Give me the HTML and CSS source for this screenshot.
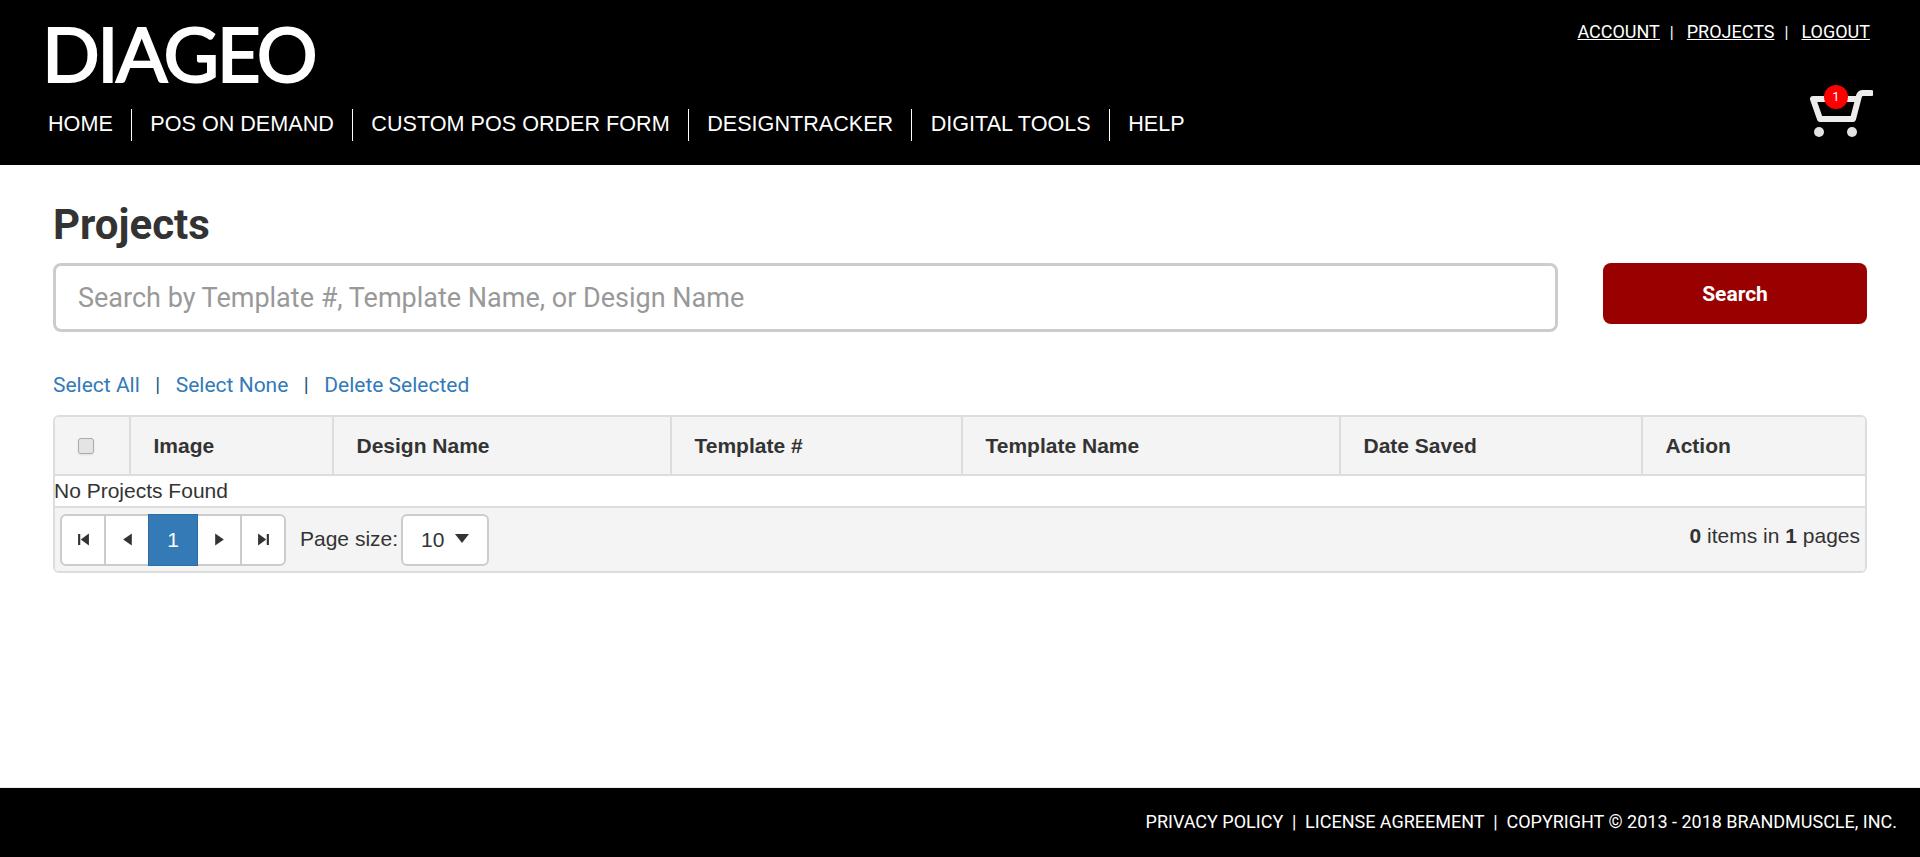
FILE: index.html
```html
<!DOCTYPE html>
<html lang="en">
<head>
<meta charset="utf-8">
<title>Projects</title>
<link rel="stylesheet" href="styles.css">
</head>
<body>
<div class="page">
  <header class="site-header">
    <div class="header-main">
      <div class="logo">DIAGEO</div>
      <nav class="main-nav">
        <a href="#">HOME</a><a href="#">POS ON DEMAND</a><a href="#">CUSTOM POS ORDER FORM</a><a href="#">DESIGNTRACKER</a><a href="#">DIGITAL TOOLS</a><a href="#">HELP</a>
      </nav>
    </div>
    <div class="header-side">
      <div class="user-links">
        <a href="#">ACCOUNT</a><span class="sep">|</span><a href="#">PROJECTS</a><span class="sep">|</span><a href="#">LOGOUT</a>
      </div>
      <div class="cart">
        <svg class="cart-icon" viewBox="0 0 64 50" width="64" height="50" aria-hidden="true">
          <path d="M4 12 H49 M4 12 L11 32 H44 L50 9 Q51 6 54 6 H62" fill="none" stroke="#ececec" stroke-width="6" stroke-linecap="round" stroke-linejoin="round"/>
          <circle cx="10" cy="45" r="5" fill="#e2e2e2"/>
          <circle cx="43" cy="45" r="5" fill="#e2e2e2"/>
        </svg>
        <span class="badge">1</span>
      </div>
    </div>
  </header>

  <main class="content">
    <h1 class="title">Projects</h1>
    <form class="search-row">
      <input class="search-input" type="text" placeholder="Search by Template #, Template Name, or Design Name">
      <button class="search-btn" type="button">Search</button>
    </form>
    <div class="actions">
      <a href="#">Select All</a><span class="sep">|</span><a href="#">Select None</a><span class="sep">|</span><a href="#">Delete Selected</a>
    </div>
    <section class="grid">
      <div class="grid-head">
        <div class="cell check"><input type="checkbox" class="checkbox"></div>
        <div class="cell">Image</div>
        <div class="cell">Design Name</div>
        <div class="cell">Template #</div>
        <div class="cell">Template Name</div>
        <div class="cell">Date Saved</div>
        <div class="cell">Action</div>
      </div>
      <div class="grid-empty">No Projects Found</div>
      <div class="grid-pager">
        <div class="pager">
          <a class="pg first" href="#"><svg viewBox="0 0 12 12" width="13" height="13"><path d="M1 1h2v10H1zM11 .5v11L3.500 6z"/></svg></a>
          <a class="pg" href="#"><svg viewBox="0 0 12 12" width="13" height="13"><path d="M10 .5v11L2 6z"/></svg></a>
          <a class="pg current" href="#">1</a>
          <a class="pg next" href="#"><svg viewBox="0 0 12 12" width="13" height="13"><path d="M2 .5v11L10 6z"/></svg></a>
          <a class="pg" href="#"><svg viewBox="0 0 12 12" width="13" height="13"><path d="M9 1h2v10H9zM1 .5v11L8.500 6z"/></svg></a>
        </div>
        <span class="size-label">Page size:</span>
        <div class="size-select"><span>10</span><i class="caret"></i></div>
        <div class="pager-info"><b>0</b> items in <b>1</b> pages</div>
      </div>
    </section>
  </main>

  <footer class="site-footer">
    <a href="#">PRIVACY POLICY</a><span class="sep">|</span><a href="#">LICENSE AGREEMENT</a><span class="sep">|</span><span>COPYRIGHT © 2013 - 2018 BRANDMUSCLE, INC.</span>
  </footer>
</div>
</body>
</html>
```
FILE: styles.css
```css
* { box-sizing: border-box; }
html, body { margin: 0; height: 100%; }
body { font-family: "Liberation Sans", Arial, sans-serif; color: #333; background: #fff; }
a { text-decoration: none; color: inherit; }
.page { height: 857px; display: flex; flex-direction: column; overflow: hidden; }

.site-header { height: 165px; background: #000; color: #fff; display: flex; justify-content: space-between; padding: 0 50px 0 48px; flex: none; }
.logo { font-family: Lato, sans-serif; font-size: 76px; font-weight: 400; line-height: 57px; margin: 24px 0 0 -6px; letter-spacing: -2.5px; -webkit-text-stroke: 2px #fff; }
.main-nav { display: flex; margin-top: 28px; }
.main-nav a { font-size: 21.6px; line-height: 30px; height: 32px; padding: 0 18.250px; border-left: 1px solid #fff; }
.main-nav a:first-child { border-left: 0; padding-left: 0; }
.header-side { display: flex; flex-direction: column; align-items: flex-end; }
.user-links { font-family: Roboto, sans-serif; font-size: 18px; line-height: 20px; margin-top: 22px; }
.user-links a { text-decoration: underline; }
.user-links .sep { margin: 0 13px 0 10px; font-size: 16px; }
.cart { position: relative; width: 64px; height: 50px; margin-top: 44px; margin-right: -3px; }
.cart-icon { display: block; }
.badge { position: absolute; left: 15px; top: -2px; width: 24px; height: 24px; border-radius: 50%; background: #f00; color: #fff; font-family: Roboto, sans-serif; font-size: 13px; line-height: 24px; text-align: center; }

.content { flex: 1; padding: 0 53px; }
.title { font-family: Roboto, sans-serif; font-size: 42px; font-weight: 700; line-height: 46px; margin: 37px 0 15px; color: #333; }
.search-row { display: flex; justify-content: space-between; align-items: flex-start; }
.search-input { width: 1505px; height: 69px; border: 3px solid #ccc; border-radius: 8px; padding: 0 22px; font-family: Roboto, sans-serif; font-size: 27px; outline: none; }
.search-input::placeholder { color: #999; opacity: 1; }
.search-btn { width: 264px; height: 61px; border: 0; border-radius: 8px; background: #990000; color: #fff; font-family: Roboto, sans-serif; font-size: 21px; font-weight: 700; }
.actions { font-family: Roboto, sans-serif; font-size: 21px; line-height: 24px; margin-top: 41px; color: #337ab7; }
.actions .sep { color: #23527c; margin: 0 15.500px; font-size: 20px; }

.grid { margin-top: 18px; border: 2px solid #ddd; border-radius: 6px; overflow: hidden; width: 1814px; }
.grid-head { display: grid; grid-template-columns: 74px 203px 338px 291px 378px 302px 1fr; height: 59px; background: #f4f4f4; border-bottom: 2px solid #ddd; font-weight: 700; font-size: 21px; }
.cell { display: flex; align-items: center; padding-left: 22.500px; border-left: 2px solid #ddd; }
.cell:first-child { border-left: 0; padding-left: 23px; }
.checkbox { appearance: none; width: 16px; height: 16px; margin: 0; background: #e4e4e4; border: 1px solid #aaa; border-radius: 3px; box-shadow: 0 1px 2px #ddd; }
.grid-empty { font-size: 21px; line-height: 30px; height: 32px; border-bottom: 2px solid #ddd; margin-left: -1px; }
.grid-pager { display: flex; align-items: center; height: 63px; padding: 0 5px; background: #f4f4f4; font-size: 21px; }
.pager { display: flex; height: 52px; border: 2px solid #ccc; border-radius: 6px; background: #fff; }
.pg { width: 44px; display: flex; align-items: center; justify-content: center; border-left: 2px solid #ccc; font-size: 21px; }
.pg:first-child { border-left: 0; width: 42px; }
.pg.next { border-left: 0; width: 42px; }
.pg svg { fill: #333; display: block; }
.pg.current { width: 50px; margin: -2px 0; background: #337ab7; color: #fff; border: 1px solid #2e6da4; }
.size-label { margin: 0 3px 0 14px; padding-bottom: 2px; }
.size-select { width: 88px; height: 52px; border: 2px solid #ccc; border-radius: 6px; background: #fff; display: flex; align-items: center; justify-content: space-between; padding: 0 18px 0 18px; }
.caret { width: 0; height: 0; border-left: 7px solid transparent; border-right: 7px solid transparent; border-top: 9px solid #333; margin-top: -3px; }
.pager-info { margin-left: auto; padding-bottom: 7px; }

.site-footer { height: 70px; flex: none; background: #000; color: #fff; display: flex; align-items: center; justify-content: flex-end; padding: 0 23px 2px 0; font-family: Roboto, sans-serif; font-size: 18px; border-top: 1px solid #eee; }
.site-footer .sep { margin: 0 8.750px; }
```
